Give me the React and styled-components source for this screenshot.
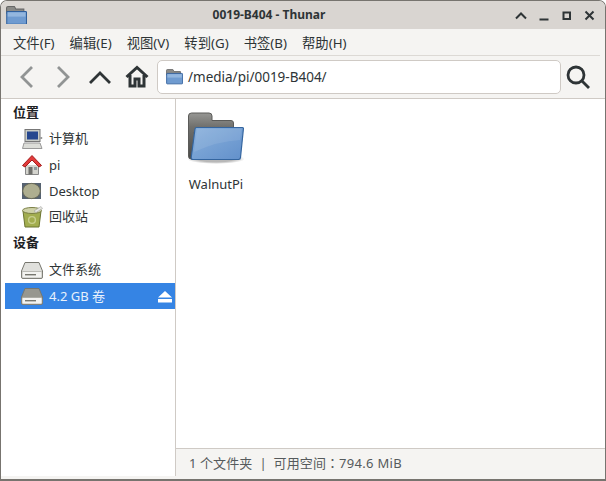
import React from 'react';
import styled, { createGlobalStyle } from 'styled-components';

const Global = createGlobalStyle`
  html, body { margin: 0; padding: 0; background: #fff; }
  body { font-family: "Noto Sans", "Noto Sans CJK SC", sans-serif; font-size: 13px; color: #2e3436; }
`;

const Win = styled.div`
  width: 606px;
  height: 481px;
  box-sizing: border-box;
  display: flex;
  flex-direction: column;
  background: #f5f4f2;
  border: 1px solid #77746f;
  border-bottom-width: 2px;
  border-radius: 7px 7px 0 0;
  overflow: hidden;
`;

const TitleBar = styled.div`
  height: 28px;
  flex: none;
  background: #d9d5d1;
  display: flex;
  align-items: center;
  position: relative;
  padding: 0 7px 0 5px;
`;

const TitleText = styled.div`
  position: absolute;
  left: 0;
  right: 0;
  top: 5px;
  text-align: center;
  font-size: 12px;
  line-height: 17px;
  font-weight: 700;
  color: #2e3436;
  padding-right: 68px;
`;

const WinButtons = styled.div`
  margin-left: auto;
  margin-top: 2px;
  display: flex;
  gap: 7px;
`;

const MenuBar = styled.div`
  height: 27px;
  flex: none;
  box-sizing: border-box;
  display: flex;
  align-items: center;
  padding: 2px 0 0 5px;
  gap: 1px;
  border-bottom: 1px solid #dcd9d5;
  margin-right: 5px;
`;

const MenuItem = styled.span`
  padding: 0 7px;
  font-size: 13.33px;
  line-height: 18px;
  color: #2e3436;
`;

const ToolBar = styled.div`
  height: 42px;
  flex: none;
  display: flex;
  align-items: center;
  padding: 0 0 0 14px;
`;

const ToolIcon = styled.svg`
  flex: none;
  width: ${p => p.$w || 24}px;
  height: 24px;
  margin-right: ${p => p.$gap || 0}px;
  fill: none;
  stroke: ${p => (p.$off ? '#919494' : '#2e3436')};
  stroke-width: ${p => p.$sw || 2.8};
`;

const PathBox = styled.div`
  width: 404px;
  height: 34px;
  box-sizing: border-box;
  flex: none;
  background: #fff;
  border: 1px solid #cfcac5;
  border-radius: 5px;
  display: flex;
  align-items: center;
  padding-left: 8px;
  gap: 5px;
  margin-right: 5px;
`;

const PathText = styled.span`
  font-size: 13.5px;
  color: #2e3436;
`;

const Body = styled.div`
  flex: 1;
  min-height: 0;
  display: flex;
  border-top: 1px solid #cfcac5;
  margin-bottom: 3px;
`;

const Side = styled.div`
  width: 170px;
  flex: none;
  background: #fff;
  padding: 1px 0 0 4px;
  border-right: 1px solid #cfcac5;
`;

const Heading = styled.div`
  height: ${p => p.$h || 26}px;
  line-height: 25px;
  padding-left: 8px;
  font-size: 13px;
  font-weight: 700;
  color: #1e2224;
`;

const Row = styled.div`
  height: 26px;
  display: flex;
  align-items: center;
  padding-left: 17px;
  gap: 6px;
  font-size: 13px;
  line-height: 20px;
  background: ${p => (p.$on ? '#3584e4' : 'transparent')};
  color: ${p => (p.$on ? '#e8f1fc' : '#2e3436')};
`;

const RowLabel = styled.span`
  padding-bottom: ${p => (p.$cjk ? 2 : 0)}px;
`;

const RowIcon = styled.svg`
  width: 22px;
  height: 22px;
  flex: none;
  margin-left: -1px;
`;

const Eject = styled.svg`
  width: 14px;
  height: 13px;
  margin-left: auto;
  margin-right: 3px;
  fill: #fff;
`;

const Main = styled.div`
  flex: 1;
  min-width: 0;
  display: flex;
  flex-direction: column;
  background: #fff;
`;

const Files = styled.div`
  flex: 1;
  padding: 13px 0 0 8px;
`;

const FileItem = styled.div`
  width: 64px;
  display: flex;
  flex-direction: column;
  align-items: center;
  gap: 10px;
`;

const FileName = styled.span`
  font-size: 13px;
  line-height: 20px;
  color: #2e3436;
`;

const Status = styled.div`
  height: 28px;
  flex: none;
  box-sizing: border-box;
  background: #f5f4f2;
  border-top: 1px solid #cfcac5;
  padding-left: 13px;
  display: flex;
  align-items: center;
  font-size: 13px;
  line-height: 20px;
  letter-spacing: 0.1px;
  color: #555a5c;
  white-space: pre;
`;

const StatusColon = styled.span`
  font-family: "Noto Sans CJK TC", sans-serif;
  letter-spacing: 0;
`;

const StatusSize = styled.span`
  letter-spacing: 0.3px;
`;

function BigFolder() {
  return (
    <svg width="56" height="52" viewBox="0 0 56 52">
      <defs>
        <linearGradient id="backG" x1="0" x2="0" y1="0" y2="1">
          <stop offset="0" stopColor="#979794" />
          <stop offset="0.3" stopColor="#70706d" />
          <stop offset="1" stopColor="#4a4a48" />
        </linearGradient>
        <linearGradient id="frontG" x1="0" x2="1" y1="0" y2="1">
          <stop offset="0" stopColor="#8ab1dc" />
          <stop offset="1" stopColor="#6290cb" />
        </linearGradient>
        <radialGradient id="shadowG">
          <stop offset="0.6" stopColor="#000" stopOpacity="0.28" />
          <stop offset="1" stopColor="#000" stopOpacity="0" />
        </radialGradient>
      </defs>
      <ellipse cx="28" cy="47" rx="29" ry="5" fill="url(#shadowG)" />
      <path d="M0.5 4 Q0.5 1 3.5 1 H21 Q24 1 24 4 V8.5 H43 Q45.5 8.5 45.5 11 V20 H6 L4.5 47 H3 Q0.5 47 0.5 44 Z" fill="url(#backG)" stroke="#5b5b59" />
      <path d="M8.5 15.5 H54.5 Q55.5 15.5 55.4 17 L52.5 45.5 Q52.4 47.5 50.5 47.5 H5 Q3 47.5 3.2 45.5 L7 17 Q7.2 15.5 8.5 15.5 Z" fill="url(#frontG)" stroke="#34659f" strokeWidth="1.2" />
      <path d="M9 17 H53.5 L52 28 Q30 29 6 40 Z" fill="#fff" opacity="0.09" />
    </svg>
  );
}

function SmallFolder({ w }) {
  return (
    <svg width={w} height={w * 0.9} viewBox="0 0 20 18">
      <path d="M0.5 2 Q0.5 0.5 2 0.5 H8 L9.5 3 H17 V7 H0.5 Z" fill="#8a8a87" stroke="#666" />
      <rect x="0.7" y="5.2" width="18.8" height="12.3" rx="0.8" fill="#6f9bd0" stroke="#2f5f9c" />
      <rect x="1.6" y="6.1" width="17" height="4" fill="#a3c2e4" opacity="0.7" />
    </svg>
  );
}

function Computer() {
  return (
    <RowIcon viewBox="0 0 22 22">
      <rect x="4" y="1.5" width="15" height="12" fill="#c9ccc6" stroke="#777" />
      <rect x="6" y="3.5" width="11" height="8" fill="#26478f" />
      <rect x="19.2" y="9" width="2" height="2" fill="#999" />
      <path d="M3 15 H19 L21 20.5 H1.5 Z" fill="#dcddd8" stroke="#999" />
    </RowIcon>
  );
}

function HomeIcon() {
  return (
    <RowIcon viewBox="0 0 22 22">
      <path d="M4.5 11 V20.5 H17.5 V11" fill="#d4d4ce" stroke="#888" />
      <rect x="7.5" y="13" width="4" height="7.5" fill="#6f6f6b" />
      <rect x="13" y="13" width="3" height="3" fill="#8f9a9c" />
      <path d="M1.5 11.5 L11 1.5 L20.5 11.5 L18 13 L11 6 L4 13 Z" fill="#e23b3b" stroke="#a51d1d" />
    </RowIcon>
  );
}

function DesktopIcon() {
  return (
    <RowIcon viewBox="0 0 22 22">
      <rect x="1" y="3" width="19" height="16" fill="#566270" />
      <ellipse cx="10.5" cy="11" rx="8.8" ry="7.6" fill="#aeae90" stroke="#6b6b58" />
    </RowIcon>
  );
}

function TrashIcon() {
  return (
    <RowIcon viewBox="0 0 22 22">
      <path d="M2 5 L4 21 H18 L20 5 Z" fill="#a2ad4f" stroke="#6b7430" />
      <ellipse cx="11" cy="4.5" rx="9.5" ry="3" fill="#cfd2a8" stroke="#7a7f45" />
      <path d="M13 5 L20 0.5 L21.5 2.5 L15 6.5 Z" fill="#e6e6e0" stroke="#999" strokeWidth="0.5" />
      <circle cx="11" cy="14" r="3.4" fill="none" stroke="#c8cf8e" strokeWidth="1.4" />
    </RowIcon>
  );
}

function DriveIcon({ dark }) {
  return (
    <RowIcon viewBox="0 0 22 22">
      <path d="M4 3.5 H18 L21.5 12 V18 Q21.5 19.5 20 19.5 H2 Q0.5 19.5 0.5 18 V12 Z" fill={dark ? '#97978f' : '#e0e0dc'} stroke="#77776f" />
      <rect x="1" y="12.5" width="20" height="6.5" rx="1" fill="#f3f3f0" stroke="#9a9a94" strokeWidth="0.6" />
      <rect x="4" y="15" width="11" height="1.4" fill="#77776f" />
    </RowIcon>
  );
}

const menus = ['文件(F)', '编辑(E)', '视图(V)', '转到(G)', '书签(B)', '帮助(H)'];

export default function App() {
  return (
    <>
      <Global />
      <Win>
        <TitleBar>
          <SmallFolder w={21} />
          <TitleText>0019-B404 - Thunar</TitleText>
          <WinButtons>
            <ToolIcon viewBox="0 0 16 16" $w={16} $sw={2}><path d="M3 10.5 L8 5.5 L13 10.5" /></ToolIcon>
            <ToolIcon viewBox="0 0 16 16" $w={16} $sw={2}><path d="M3.5 11.5 H12.5" /></ToolIcon>
            <ToolIcon viewBox="0 0 16 16" $w={16} $sw={2}><rect x="4.5" y="4.5" width="6.5" height="6.5" /></ToolIcon>
            <ToolIcon viewBox="0 0 16 16" $w={16} $sw={2}><path d="M3.5 3.5 L11.5 11.5 M11.5 3.5 L3.5 11.5" /></ToolIcon>
          </WinButtons>
        </TitleBar>
        <MenuBar>
          {menus.map(m => <MenuItem key={m}>{m}</MenuItem>)}
        </MenuBar>
        <ToolBar>
          <ToolIcon viewBox="0 0 24 24" $off $gap={12}><path d="M17 2 L7 12 L17 22" /></ToolIcon>
          <ToolIcon viewBox="0 0 24 24" $off $gap={13}><path d="M7 2 L17 12 L7 22" /></ToolIcon>
          <ToolIcon viewBox="0 0 24 24" $gap={13}><path d="M2 18 L12 8 L22 18" /></ToolIcon>
          <ToolIcon viewBox="0 0 24 24" $gap={8} $sw={3}><path d="M1.5 12 L12 2.5 L22.5 12 M5 10 V21 H10 V14 H14 V21 H19 V10" /></ToolIcon>
          <PathBox>
            <SmallFolder w={17} />
            <PathText>/media/pi/0019-B404/</PathText>
          </PathBox>
          <ToolIcon viewBox="0 0 24 24"><circle cx="10" cy="10" r="8" /><path d="M16 16 L23 23" /></ToolIcon>
        </ToolBar>
        <Body>
          <Side>
            <Heading>位置</Heading>
            <Row><Computer /><RowLabel $cjk>计算机</RowLabel></Row>
            <Row><HomeIcon /><RowLabel>pi</RowLabel></Row>
            <Row><DesktopIcon /><RowLabel>Desktop</RowLabel></Row>
            <Row><TrashIcon /><RowLabel $cjk>回收站</RowLabel></Row>
            <Heading $h={27}>设备</Heading>
            <Row><DriveIcon /><RowLabel $cjk>文件系统</RowLabel></Row>
            <Row $on><DriveIcon dark /><RowLabel>4.2 GB 卷</RowLabel><Eject viewBox="0 0 14 13"><path d="M7 1 L14 7.5 H0 Z M0 9 H14 V12.5 H0 Z" /></Eject></Row>
          </Side>
          <Main>
            <Files>
              <FileItem>
                <BigFolder />
                <FileName>WalnutPi</FileName>
              </FileItem>
            </Files>
            <Status>1 个文件夹  |  可用空间<StatusColon>：</StatusColon><StatusSize>794.6 MiB</StatusSize></Status>
          </Main>
        </Body>
      </Win>
    </>
  );
}
